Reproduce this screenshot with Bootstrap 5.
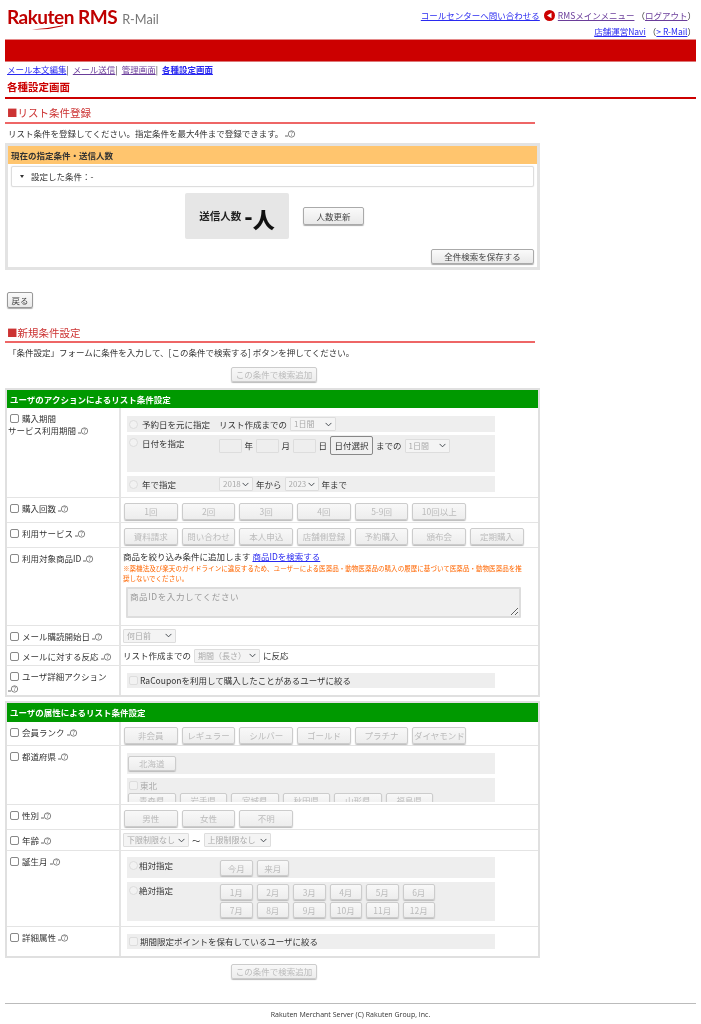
<!DOCTYPE html>
<html lang="ja">
<head>
<meta charset="utf-8">
<title>R-Mail 各種設定画面</title>
<link href="https://cdn.jsdelivr.net/npm/bootstrap@5.3.0/dist/css/bootstrap.min.css" rel="stylesheet">
<style>
html,body{background:#fff}
body{font-family:"Noto Sans CJK JP","Liberation Sans",sans-serif;font-size:8.5px;line-height:1.2;color:#333;padding:0 5px;width:701px;height:1024px;overflow:hidden;filter:blur(.3px)}
a{color:#2a2af0}
a.vis{color:#6a3d9a}
.hdr{height:39px}
.logo{padding:7px 0 0 2px;line-height:1;position:relative}
.logo-main{font-family:Lato,"Liberation Sans",sans-serif;font-size:19px;font-weight:700;color:#bf0000;letter-spacing:-.5px}
.logo-sub{font-family:Lato,"Liberation Sans",sans-serif;font-size:12.7px;color:#777;margin-left:5px}
.logo-swoosh{position:absolute;left:27px;top:25px}
.toplinks{font-size:8.5px;text-align:right;padding:7px 0 0 0}
.toplinks .tl{height:16px;gap:2px}
.toplinks svg{margin:0 1px 0 2px}
.redbar{height:23px;background:#c00;border-top:1px solid #e58a8a;border-bottom:1px solid #d77}
.navl{height:16px;padding:2px 0 0 2px;font-size:8.5px;color:#333}
.navl a+span{margin-right:4px}
.ttl{height:21px;border-bottom:2px solid #c00;color:#c00;font-weight:700;font-size:10.5px;line-height:17px;padding-left:2px}
.sech{width:530px;color:#c33;font-size:10.5px;border-bottom:2px solid #e66;padding-left:2px}
.sech1{height:25px;line-height:27px}
.sech2{height:25px;margin-top:10px;line-height:30px}
.desc{height:19px;line-height:19px;padding-left:3px}
.hi{display:inline-block;margin-left:2px;vertical-align:-1px;width:11px;height:8px}
.pnl{width:535px;height:127px;border:3px solid #e3e3e3;background:#fff}
.pnl-h{height:18px;background:#ffc56e;font-weight:700;font-size:8.5px;line-height:18px;padding-left:3px;color:#333}
.cbox{height:21px;margin:2px 3px 0;border:1px solid #ddd;border-radius:2px;line-height:19px;padding-left:8px;box-shadow:0 0 1px #ccc}
.cbox i{display:inline-block;border:2.5px solid transparent;border-top:3px solid #333;border-bottom:0;margin-right:7px;vertical-align:2px}
.cnt{margin-top:6px;height:46px;padding-left:177px;gap:14px}
.cntb{width:104px;height:46px;background:#e6e6e6;border-radius:2px;font-weight:700;font-size:10.5px;color:#222;gap:3px}
.cntb b{font-size:22px;font-weight:900;line-height:1;color:#111}
.cntb u{text-decoration:none;vertical-align:3px}
.bt.btn{font-size:8.5px;line-height:1;padding:0;color:#444;background:linear-gradient(#fafafa,#e9e9e9);border:1px solid #aaa;border-radius:2px;box-shadow:0 1px 1px #aaa;height:18px;white-space:nowrap;overflow:hidden}
.bt.btn:disabled{color:#bbb;background:linear-gradient(#f8f8f8,#ededed);border-color:#ccc;opacity:1;box-shadow:0 1px 1px #bbb}
.b-upd.btn{width:61px}
.b-save.btn{width:103px;height:15px}
.saver{margin-top:10px;padding-right:3px}
.b-back.btn{width:26px;height:16px;margin:22px 0 0 2px;display:block;border-color:#999}
.b-add.btn{width:86px;height:15px;display:block}
.addr1{padding:5px 0 0 226px;height:26px}
.addr2{padding:6px 0 0 226px}
.tb{width:535px;border:2px solid #e0e0e0;background:#fff}
.tb2{margin-top:4px}
.tb-h{background:#090;color:#fff;font-weight:700;font-size:8.5px;line-height:18px;height:18px;padding-left:3px}
.tb2 .tb-h{height:19px;line-height:19px}
.rw{border-bottom:1px solid #e4e4e4}
.rw:last-child{border-bottom:0}
.lc{width:114px;flex:none;border-right:2px solid #e4e4e4;padding:4px 0 0 1px;font-size:8.5px;line-height:12px}
.rc{flex:1;min-width:0;padding:5px 0 0 3px}
.h90{height:90px}.h25{height:25px}.h78{height:78px}.h20{height:20px}.h29{height:29px}.h24{height:24px}.h59{height:59px}.h21{height:21px}.h76{height:76px}
.chk.form-check-input,.rad.form-check-input{width:9px;height:9px;margin:0 3px 0 2px;border:1px solid #888;border-radius:2px;background-color:#fff;opacity:1;flex:none;float:none;vertical-align:-1px}
.rad.form-check-input{border-radius:50%;border-color:#ddd;background-color:#f2f2f2;margin:0 4px 0 1px}
.chk.dim.form-check-input{border-color:#ddd;background-color:#f2f2f2;margin:0 2px 0 1px}
.bnd{width:368px;margin-left:3px;background:#eee;padding-left:1px}
.rc.pt8{padding-top:8px}
.rc.pt7{padding-top:7px}
.rc.pt6{padding-top:6px}
.rc.pt3{padding-top:3px;padding-left:2px}
.rc.mid{padding:0 0 0 2px}
.b1{height:16px}
.b2{height:37px;margin-top:3px;padding-top:1px}
.bx{margin-top:4px}
.b15{height:15px}
.lblw{width:77px;flex:none}
.b2 .lblw{margin-top:2px}
.b2 .rad{margin-top:2px}
.ipt.form-control{width:22.5px;height:14px;padding:0;min-height:0;border:1px solid #ddd;border-radius:1px;background:#eee;flex:none}
.sel.form-select{height:14px;padding:0 0 0 3px;font-size:8px;line-height:12px;color:#aaa;background-color:#f4f4f4;border:1px solid #ddd;border-radius:1px;background-position:right 3px center;background-size:7px 7px;flex:none;min-height:0}
.s46{width:46px;margin-left:3px}.s45{width:45px}.s34{width:34px}.s53{width:53px}.s66{width:66px}.s67{width:67px}
.gp3{gap:3px}
.b-date.btn{width:43px;height:19px;border-color:#888;background:#f0f0f0;box-shadow:none;color:#333}
.brow{gap:4px}
.brow .bt.btn{width:53.7px;height:17px}
.warn{font-size:6.55px;line-height:10px;color:#f60;margin-top:1px;width:402px}
.ta.form-control{width:395px;height:31px;margin:4px 0 0 3px;padding:1px 2px;min-height:0;border:2px solid #ddd;border-radius:1px;background:#f0f0f0;font-size:8.5px;letter-spacing:.6px}
.ta.form-control::placeholder{color:#999}
.ta.form-control:disabled{background:#f0f0f0}
.pref1{height:21px;padding:3px 0 0 1px}
.pref2{height:24px;margin-top:4px;padding:2px 0 0 1px;overflow:hidden;color:#aaa}
.pref-r{gap:4px;margin-top:3px}
.pref1 .bt.btn,.pref-r .bt.btn{width:47.5px;height:15px}
.bm{height:21px}
.bm2{height:39px;margin-top:4px}
.mlab{width:92px;flex:none;padding-top:3px}
.mlab .rad.form-check-input{margin:1px 1px 0 1px}
.monw{width:275px;flex:none;padding-top:3px}
.bm2 .monw{padding-top:2px}
.bmrow{height:16px;margin-bottom:2px;gap:4px}
.bmrow .bt.btn{width:32.5px;height:16px}
.ftl{margin-top:24px;border-top:1px solid #bbb;width:691px;height:22px;text-align:center;font-family:"Open Sans","Liberation Sans",sans-serif;font-size:7px;line-height:20px;color:#333;padding-top:1px}
</style>
</head>
<body>
<svg width="0" height="0" class="position-absolute"><defs><symbol id="hlp" viewBox="0 0 11 8"><path d="M0 6H3" stroke="#666"/><circle cx="6.5" cy="4" r="3.2" fill="none" stroke="#666" stroke-width=".8"/><text x="6.5" y="6" font-size="5.5" text-anchor="middle" fill="#555">?</text></symbol></defs></svg>

<div class="hdr d-flex justify-content-between align-items-start">
  <div class="logo">
    <span class="logo-main">Rakuten RMS</span><span class="logo-sub">R-Mail</span>
    <svg class="logo-swoosh" width="32" height="5" viewBox="0 0 32 5"><path d="M0 4.5 Q16 3.5 31 .3 L31 1.2 Q16 5 0 4.5Z" fill="#bf0000"/></svg>
  </div>
  <div class="toplinks">
    <div class="tl d-flex justify-content-end align-items-center">
      <a href="#">コールセンターへ問い合わせる</a>
      <svg width="11" height="11" viewBox="0 0 11 11"><circle cx="5.5" cy="5.5" r="5.5" fill="#c00"/><path d="M3 5.5 L7.5 2.8 V8.2Z" fill="#fff"/></svg>
      <a class="vis" href="#">RMSメインメニュー</a><span>（<a class="vis" href="#">ログアウト</a>）</span>
    </div>
    <div class="tl d-flex justify-content-end align-items-center">
      <a href="#">店舗運営Navi</a><span>（<a href="#">&gt; R-Mail</a>）</span>
    </div>
  </div>
</div>

<div class="redbar"></div>

<div class="navl">
  <a href="#">メール本文編集</a><span>|</span><a class="vis" href="#">メール送信</a><span>|</span><a class="vis" href="#">管理画面</a><span>|</span><a href="#" class="fw-bold">各種設定画面</a>
</div>
<div class="ttl">各種設定画面</div>

<div class="sech sech1">■リスト条件登録</div>
<div class="desc">リスト条件を登録してください。指定条件を最大4件まで登録できます。<svg class="hi"><use href="#hlp"/></svg></div>

<div class="pnl">
  <div class="pnl-h">現在の指定条件・送信人数</div>
  <div class="cbox"><i></i>設定した条件：-</div>
  <div class="cnt d-flex align-items-center">
    <div class="cntb d-flex align-items-center justify-content-center"><span>送信人数</span><b><u>-</u>人</b></div>
    <button type="button" class="btn bt b-upd">人数更新</button>
  </div>
  <div class="saver d-flex justify-content-end"><button type="button" class="btn bt b-save">全件検索を保存する</button></div>
</div>

<button type="button" class="btn bt b-back">戻る</button>

<div class="sech sech2">■新規条件設定</div>
<div class="desc">「条件設定」フォームに条件を入力して、[この条件で検索する] ボタンを押してください。</div>
<div class="addr1"><button type="button" class="btn bt b-add" disabled>この条件で検索追加</button></div>

<div class="tb">
  <div class="tb-h">ユーザのアクションによるリスト条件設定</div>

  <div class="rw d-flex h90">
    <div class="lc"><input class="form-check-input chk" type="checkbox">購入期間<br>サービス利用期間<svg class="hi"><use href="#hlp"/></svg></div>
    <div class="rc pt8">
      <div class="bnd b1 d-flex align-items-center">
        <input class="form-check-input rad" type="radio" disabled><span class="lblw">予約日を元に指定</span><span>リスト作成までの</span>
        <select class="form-select sel s46" disabled><option>1日間</option></select>
      </div>
      <div class="bnd b2 d-flex align-items-start">
        <input class="form-check-input rad" type="radio" disabled><span class="lblw">日付を指定</span>
        <div class="d-flex align-items-center gp3">
          <input class="form-control ipt" disabled><span>年</span>
          <input class="form-control ipt" disabled><span>月</span>
          <input class="form-control ipt" disabled><span>日</span>
          <button type="button" class="btn bt b-date">日付選択</button><span>までの</span>
          <select class="form-select sel s45" disabled><option>1日間</option></select>
        </div>
      </div>
      <div class="bnd b1 bx d-flex align-items-center">
        <input class="form-check-input rad" type="radio" disabled><span class="lblw">年で指定</span>
        <div class="d-flex align-items-center gp3">
          <select class="form-select sel s34" disabled><option>2018</option></select><span>年から</span>
          <select class="form-select sel s34" disabled><option>2023</option></select><span>年まで</span>
        </div>
      </div>
    </div>
  </div>

  <div class="rw d-flex h25">
    <div class="lc"><input class="form-check-input chk" type="checkbox">購入回数<svg class="hi"><use href="#hlp"/></svg></div>
    <div class="rc d-flex brow">
      <button type="button" class="btn bt" disabled>1回</button><button type="button" class="btn bt" disabled>2回</button><button type="button" class="btn bt" disabled>3回</button><button type="button" class="btn bt" disabled>4回</button><button type="button" class="btn bt" disabled>5-9回</button><button type="button" class="btn bt" disabled>10回以上</button>
    </div>
  </div>

  <div class="rw d-flex h25">
    <div class="lc"><input class="form-check-input chk" type="checkbox">利用サービス<svg class="hi"><use href="#hlp"/></svg></div>
    <div class="rc d-flex brow">
      <button type="button" class="btn bt" disabled>資料請求</button><button type="button" class="btn bt" disabled>問い合わせ</button><button type="button" class="btn bt" disabled>本人申込</button><button type="button" class="btn bt" disabled>店舗側登録</button><button type="button" class="btn bt" disabled>予約購入</button><button type="button" class="btn bt" disabled>頒布会</button><button type="button" class="btn bt" disabled>定期購入</button>
    </div>
  </div>

  <div class="rw d-flex h78">
    <div class="lc"><input class="form-check-input chk" type="checkbox">利用対象商品ID<svg class="hi"><use href="#hlp"/></svg></div>
    <div class="rc pt3 lh-base" >
      <div class="lh-sm">商品を絞り込み条件に追加します <a href="#">商品IDを検索する</a></div>
      <div class="warn">※薬機法及び楽天のガイドラインに違反するため、ユーザーによる医薬品・動物医薬品の購入の履歴に基づいて医薬品・動物医薬品を推奨しないでください。</div>
      <textarea class="form-control ta" placeholder="商品IDを入力してください" disabled></textarea>
    </div>
  </div>

  <div class="rw d-flex h20">
    <div class="lc"><input class="form-check-input chk" type="checkbox">メール購読開始日<svg class="hi"><use href="#hlp"/></svg></div>
    <div class="rc mid d-flex align-items-center"><select class="form-select sel s53 ms-0" disabled><option>何日前</option></select></div>
  </div>

  <div class="rw d-flex h20">
    <div class="lc"><input class="form-check-input chk" type="checkbox">メールに対する反応<svg class="hi"><use href="#hlp"/></svg></div>
    <div class="rc mid d-flex align-items-center gp3">リスト作成までの<select class="form-select sel s66" disabled><option>期間（長さ）</option></select>に反応</div>
  </div>

  <div class="rw d-flex h29">
    <div class="lc"><input class="form-check-input chk" type="checkbox">ユーザ詳細アクション<br><svg class="hi m-0"><use href="#hlp"/></svg></div>
    <div class="rc pt7"><div class="bnd b15 d-flex align-items-center"><input class="form-check-input chk dim" type="checkbox" disabled>RaCouponを利用して購入したことがあるユーザに絞る</div></div>
  </div>
</div>

<div class="tb tb2">
  <div class="tb-h">ユーザの属性によるリスト条件設定</div>

  <div class="rw d-flex h24">
    <div class="lc"><input class="form-check-input chk" type="checkbox">会員ランク<svg class="hi"><use href="#hlp"/></svg></div>
    <div class="rc d-flex brow">
      <button type="button" class="btn bt" disabled>非会員</button><button type="button" class="btn bt" disabled>レギュラー</button><button type="button" class="btn bt" disabled>シルバー</button><button type="button" class="btn bt" disabled>ゴールド</button><button type="button" class="btn bt" disabled>プラチナ</button><button type="button" class="btn bt" disabled>ダイヤモンド</button>
    </div>
  </div>

  <div class="rw d-flex h59">
    <div class="lc"><input class="form-check-input chk" type="checkbox">都道府県<svg class="hi"><use href="#hlp"/></svg></div>
    <div class="rc pt7">
      <div class="bnd pref1"><button type="button" class="btn bt d-block" disabled>北海道</button></div>
      <div class="bnd pref2">
        <input class="form-check-input chk dim" type="checkbox" disabled>東北
        <div class="d-flex pref-r">
          <button type="button" class="btn bt" disabled>青森県</button><button type="button" class="btn bt" disabled>岩手県</button><button type="button" class="btn bt" disabled>宮城県</button><button type="button" class="btn bt" disabled>秋田県</button><button type="button" class="btn bt" disabled>山形県</button><button type="button" class="btn bt" disabled>福島県</button>
        </div>
      </div>
    </div>
  </div>

  <div class="rw d-flex h25">
    <div class="lc"><input class="form-check-input chk" type="checkbox">性別<svg class="hi"><use href="#hlp"/></svg></div>
    <div class="rc d-flex brow">
      <button type="button" class="btn bt" disabled>男性</button><button type="button" class="btn bt" disabled>女性</button><button type="button" class="btn bt" disabled>不明</button>
    </div>
  </div>

  <div class="rw d-flex h21">
    <div class="lc"><input class="form-check-input chk" type="checkbox">年齢<svg class="hi"><use href="#hlp"/></svg></div>
    <div class="rc mid d-flex align-items-center gp3">
      <select class="form-select sel s66" disabled><option>下限制限なし</option></select><span>～</span><select class="form-select sel s67" disabled><option>上限制限なし</option></select>
    </div>
  </div>

  <div class="rw d-flex h76">
    <div class="lc"><input class="form-check-input chk" type="checkbox">誕生月<svg class="hi"><use href="#hlp"/></svg></div>
    <div class="rc pt6">
      <div class="bnd bm d-flex">
        <div class="mlab d-flex align-items-start"><input class="form-check-input rad" type="radio" disabled><span>相対指定</span></div>
        <div class="monw"><div class="d-flex bmrow"><button type="button" class="btn bt" disabled>今月</button><button type="button" class="btn bt" disabled>来月</button></div></div>
      </div>
      <div class="bnd bm2 d-flex">
        <div class="mlab d-flex align-items-start"><input class="form-check-input rad" type="radio" disabled><span>絶対指定</span></div>
        <div class="monw">
          <div class="d-flex bmrow"><button type="button" class="btn bt" disabled>1月</button><button type="button" class="btn bt" disabled>2月</button><button type="button" class="btn bt" disabled>3月</button><button type="button" class="btn bt" disabled>4月</button><button type="button" class="btn bt" disabled>5月</button><button type="button" class="btn bt" disabled>6月</button></div>
          <div class="d-flex bmrow"><button type="button" class="btn bt" disabled>7月</button><button type="button" class="btn bt" disabled>8月</button><button type="button" class="btn bt" disabled>9月</button><button type="button" class="btn bt" disabled>10月</button><button type="button" class="btn bt" disabled>11月</button><button type="button" class="btn bt" disabled>12月</button></div>
        </div>
      </div>
    </div>
  </div>

  <div class="rw d-flex h29">
    <div class="lc"><input class="form-check-input chk" type="checkbox">詳細属性<svg class="hi"><use href="#hlp"/></svg></div>
    <div class="rc pt7"><div class="bnd b15 d-flex align-items-center"><input class="form-check-input chk dim" type="checkbox" disabled>期間限定ポイントを保有しているユーザに絞る</div></div>
  </div>
</div>

<div class="addr2"><button type="button" class="btn bt b-add" disabled>この条件で検索追加</button></div>

<div class="ftl">Rakuten Merchant Server (C) Rakuten Group, Inc.</div>

<script src="https://cdn.jsdelivr.net/npm/bootstrap@5.3.0/dist/js/bootstrap.bundle.min.js"></script>
</body>
</html>
